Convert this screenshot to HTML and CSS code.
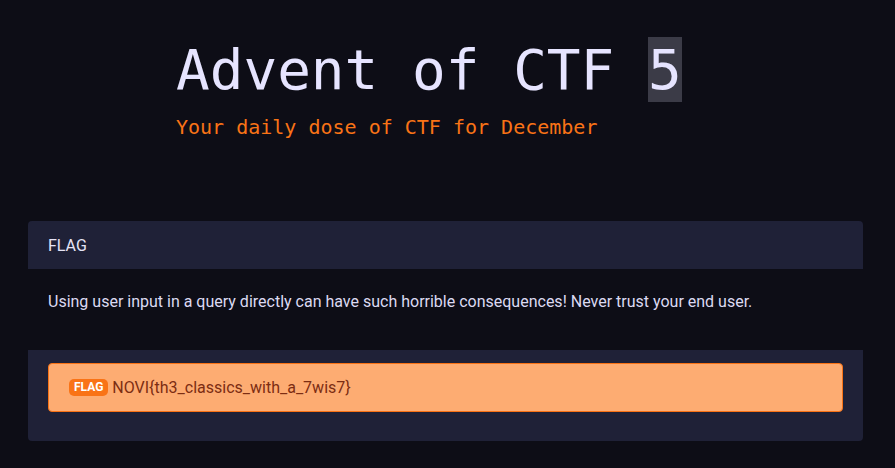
FILE: index.html
```html
<!DOCTYPE html>
<html>
<head>
<meta charset="utf-8">
<link rel="stylesheet" href="styles.css">
</head>
<body>
<header class="hero">
  <h1 class="title">Advent of CTF <span class="day">5</span></h1>
  <p class="subtitle">Your daily dose of CTF for December</p>
</header>
<section class="card">
  <div class="card-header">FLAG</div>
  <div class="card-body">Using user input in a query directly can have such horrible consequences! Never trust your end user.</div>
  <div class="card-footer">
    <div class="flag-box"><span class="badge">FLAG</span><span class="flag-text">NOVI{th3_classics_with_a_7wis7}</span></div>
  </div>
</section>
</body>
</html>
```

FILE: styles.css
```css
html, body {
  margin: 0;
  padding: 0;
  background: #0d0d16;
}
body {
  font-family: Roboto, "Noto Sans", sans-serif;
  color: #e4e4f4;
  padding: 0 32px 0 28px;
}
.hero {
  padding: 37px 0 0 148px;
  height: 185px;
  box-sizing: border-box;
}
.title {
  margin: 0;
  font-family: "DejaVu Sans Mono", monospace;
  font-weight: normal;
  font-size: 56px;
  line-height: 66px;
  color: #e6e4ff;
}
.day {
  background: #3b3b47;
}
.subtitle {
  margin: 12px 0 0 0;
  font-family: "DejaVu Sans Mono", monospace;
  font-size: 20px;
  line-height: 24px;
  color: #f97316;
}
.card {
  margin-top: 36px;
}
.card-header {
  background: #1f2137;
  border-radius: 4px 4px 0 0;
  height: 48px;
  padding: 0 20px;
  display: flex;
  align-items: center;
  font-size: 16px;
  color: #e6e4f6;
}
.card-body {
  height: 81px;
  padding: 0 20px;
  box-sizing: border-box;
  display: flex;
  align-items: center;
  font-size: 16px;
  color: #dcdaf2;
  padding-bottom: 16px;
}
.card-footer {
  background: #1f2137;
  border-radius: 0 0 4px 4px;
  padding: 13px 20px 29px 20px;
}
.flag-box {
  background: #fdac72;
  border: 1px solid #f97316;
  border-radius: 4px;
  height: 47px;
  padding: 0 20px;
  display: flex;
  align-items: center;
  gap: 4px;
}
.badge {
  background: #f97316;
  color: #ffffff;
  font-weight: bold;
  font-size: 12px;
  line-height: 17px;
  padding: 0 5px;
  border-radius: 5px;
}
.flag-text {
  color: #7c2d12;
  font-size: 16px;
}
```
